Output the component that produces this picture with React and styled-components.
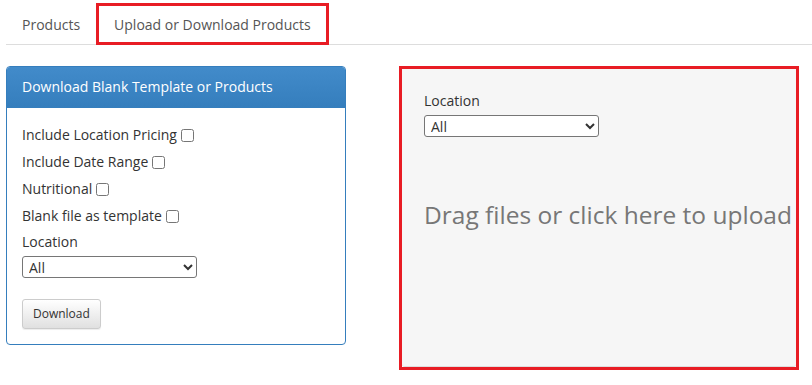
import React from "react";
import styled, { createGlobalStyle } from "styled-components";

const Global = createGlobalStyle`
  html, body { margin: 0; padding: 0; background: #fff; }
  body { font-family: "Open Sans", "Liberation Sans", sans-serif; font-size: 14px; color: #333; }
  * { box-sizing: border-box; }
`;

const Page = styled.div`
  padding: 3px 0 0 6px;
`;

const Tabs = styled.ul`
  list-style: none;
  margin: 0;
  padding: 0;
  display: flex;
  border-bottom: 1px solid #dddddd;
`;

const Tab = styled.li`
  margin-bottom: -1px;
  padding: 9px ${(p) => (p.$marked ? 15 : 13)}px 7px;
  border: 3px solid ${(p) => (p.$marked ? "#e81c24" : "transparent")};
  line-height: 20px;
  color: #555;
  font-size: 14px;
  cursor: pointer;
`;

const Content = styled.div`
  display: flex;
  align-items: flex-start;
  gap: 53px;
  margin-top: 21px;
`;

const Panel = styled.div`
  width: 340px;
  border: 1px solid #357ebd;
  border-radius: 4px;
  overflow: hidden;
`;

const PanelHeading = styled.div`
  padding: 10px 15px;
  line-height: 20px;
  color: #fff;
  background: linear-gradient(to bottom, #428bca 0%, #357ebd 100%);
  border-bottom: 1px solid #357ebd;
`;

const PanelBody = styled.div`
  padding: 17px 15px 15px;
`;

const CheckRow = styled.label`
  display: flex;
  align-items: center;
  line-height: 20px;
  margin-bottom: 7px;
  color: #333;
  &:last-of-type { margin-bottom: 6px; }
`;

const Check = styled.input.attrs({ type: "checkbox" })`
  width: 13px;
  height: 13px;
  margin: 0 0 0 4px;
`;

const FieldLabel = styled.div`
  line-height: 20px;
  color: #333;
`;

const Select = styled.select`
  display: block;
  margin-top: 4px;
  width: 175px;
  height: 22px;
  font-family: "Open Sans", "Liberation Sans", sans-serif;
  font-size: 14px;
  color: #333;
  background: #fff;
  border: 1px solid #767676;
  border-radius: 3px;
  padding: 0 2px;
`;

const Button = styled.button`
  margin-top: 21px;
  height: 30px;
  padding: 0 10px 1px;
  font-family: "Open Sans", "Liberation Sans", sans-serif;
  font-size: 12px;
  color: #333;
  background: linear-gradient(to bottom, #ffffff 0%, #e0e0e0 100%);
  border: 1px solid #cccccc;
  border-radius: 3px;
  box-shadow: 0 1px 1px rgba(0,0,0,.075);
  cursor: pointer;
`;

const Marked = styled.div`
  width: 400px;
  border: 3px solid #e81c24;
`;

const DropZone = styled.div`
  height: 298px;
  background: #f6f6f6;
  border-bottom: 1px solid #dedede;
  border-radius: 0 0 3px 3px;
  padding: 22px 22px;
`;

const DropText = styled.div`
  margin-top: 63px;
  font-size: 24.5px;
  line-height: 30px;
  color: #777;
  white-space: nowrap;
`;

export default function App() {
  return (
    <Page>
      <Global />
      <Tabs>
        <Tab>Products</Tab>
        <Tab $marked>Upload or Download Products</Tab>
      </Tabs>
      <Content>
        <Panel>
          <PanelHeading>Download Blank Template or Products</PanelHeading>
          <PanelBody>
            <CheckRow>Include Location Pricing<Check /></CheckRow>
            <CheckRow>Include Date Range<Check /></CheckRow>
            <CheckRow>Nutritional<Check /></CheckRow>
            <CheckRow>Blank file as template<Check /></CheckRow>
            <FieldLabel>Location</FieldLabel>
            <Select defaultValue="All"><option>All</option></Select>
            <Button>Download</Button>
          </PanelBody>
        </Panel>
        <Marked>
          <DropZone>
            <FieldLabel>Location</FieldLabel>
            <Select defaultValue="All"><option>All</option></Select>
            <DropText>Drag files or click here to upload</DropText>
          </DropZone>
        </Marked>
      </Content>
    </Page>
  );
}
